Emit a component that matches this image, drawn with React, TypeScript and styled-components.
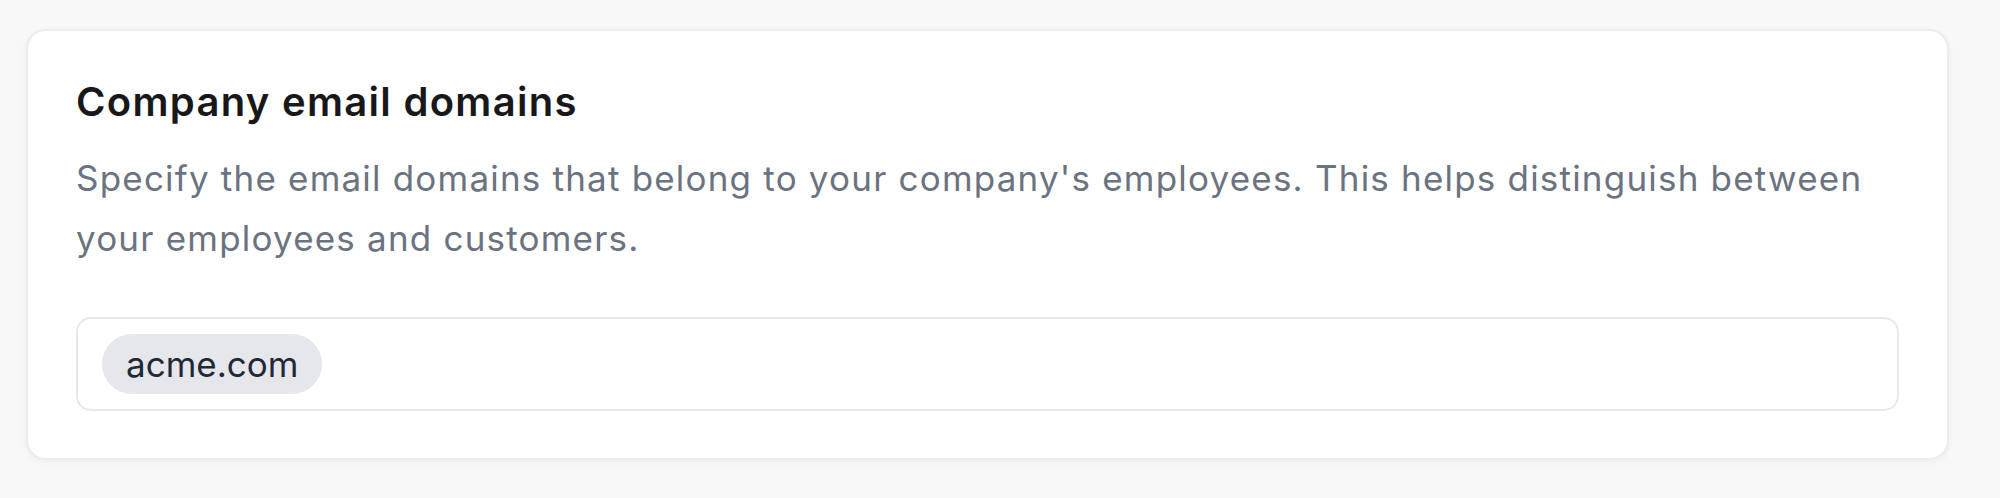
import React from 'react'
import styled, { createGlobalStyle } from 'styled-components'

const GlobalStyle = createGlobalStyle`
  html, body {
    margin: 0;
    padding: 0;
    background: #f8f8f8;
    font-family: Inter, 'Noto Sans', 'Liberation Sans', sans-serif;
    -webkit-font-smoothing: antialiased;
  }
`

const Page = styled.div`
  padding: 29px 51px 38px 26px;
  background: #f8f8f8;
`

const Card = styled.section`
  background: #ffffff;
  border: 2px solid #ececec;
  border-radius: 20px;
  box-shadow: 0 2px 6px rgba(0, 0, 0, 0.05);
  padding: 46px 48px 47px;
`

const Title = styled.h2`
  margin: 0;
  font-size: 40px;
  line-height: 50px;
  font-weight: 600;
  letter-spacing: 1.3px;
  color: #18181b;
`

const Description = styled.p`
  margin: 21px 0 0;
  font-size: 35px;
  line-height: 60px;
  font-weight: 400;
  letter-spacing: 1.2px;
  color: #6b7280;
`

const DomainInput = styled.div`
  margin-top: 49px;
  display: flex;
  align-items: center;
  flex-wrap: wrap;
  gap: 15px;
  border: 2px solid #e5e7eb;
  border-radius: 15px;
  padding: 15px 24px;
`

const Chip = styled.span`
  display: inline-flex;
  align-items: center;
  height: 60px;
  padding: 0 24px;
  border-radius: 999px;
  background: #e5e7eb;
  color: #1f2937;
  font-size: 35px;
  font-weight: 400;
`

const domains = ['acme.com']

export default function App() {
  return (
    <>
      <GlobalStyle />
      <Page>
        <Card>
          <Title>Company email domains</Title>
          <Description>
            Specify the email domains that belong to your company's employees. This helps distinguish between
            your employees and customers.
          </Description>
          <DomainInput>
            {domains.map(d => (
              <Chip key={d}>{d}</Chip>
            ))}
          </DomainInput>
        </Card>
      </Page>
    </>
  )
}
